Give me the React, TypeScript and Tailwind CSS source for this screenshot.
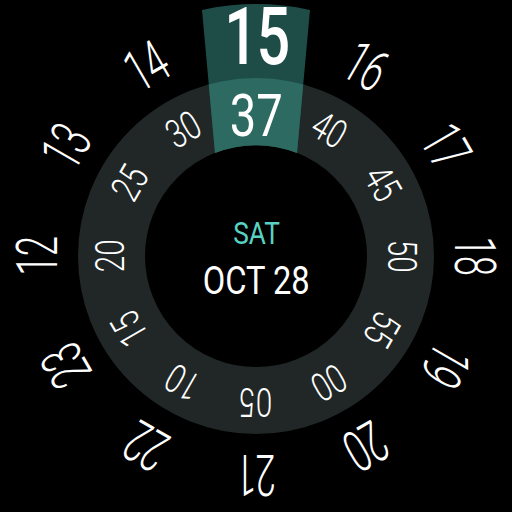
import React from 'react';

const HOURS = [12, 13, 14, 15, 16, 17, 18, 19, 20, 21, 22, 23];
const MINUTES = [0, 5, 10, 15, 20, 25, 30, 40, 45, 50, 55];
const ACTIVE_HOUR = 15;
const ACTIVE_MIN = 37;
// minute dial is indexed by 5-minute slot, 35 sits under the band
const MIN_SLOT = 35;

const pad = (n: number) => String(n).padStart(2, '0');

function Dial({ angle, radius, children }: { angle: number; radius: number; children: React.ReactNode }) {
  return (
    <div
      className="absolute left-1/2 top-1/2 w-0 h-0 flex items-center justify-center"
      style={{ transform: `rotate(${angle}deg) translateY(${-radius}px)` }}
    >
      {children}
    </div>
  );
}

function Face() {
  return (
    <svg className="absolute inset-0" width="512" height="512" viewBox="0 0 512 512">
      <defs>
        <clipPath id="ring">
          <circle cx="256" cy="256" r="178" />
        </clipPath>
      </defs>
      {/* minute ring */}
      <circle cx="256" cy="256" r="144.5" fill="none" stroke="#212726" strokeWidth="67" />
      {/* highlight band */}
      <path d="M202 10 A251 251 0 0 1 310 10 L297 153 A111 111 0 0 0 215 153 Z" fill="#1e4c46" />
      <path
        d="M202 10 A251 251 0 0 1 310 10 L297 153 A111 111 0 0 0 215 153 Z"
        fill="#2d6a61"
        clipPath="url(#ring)"
      />
    </svg>
  );
}

export default function App() {
  return (
    <div className="relative w-[512px] h-[512px] bg-black overflow-hidden font-[Roboto,sans-serif] text-white flex items-center justify-center">
      <Face />

      {HOURS.filter(h => h !== ACTIVE_HOUR).map(h => (
        <Dial key={h} angle={(h - ACTIVE_HOUR) * 30} radius={219}>
          <span className="block whitespace-nowrap text-[58px] leading-[0.8] font-light tracking-tight scale-x-[0.63]">
            {h}
          </span>
        </Dial>
      ))}

      {MINUTES.map(m => (
        <Dial key={m} angle={(m - MIN_SLOT) * 6} radius={145}>
          <span className="block whitespace-nowrap text-[40px] leading-[0.8] font-light scale-x-[0.74]">
            {pad(m)}
          </span>
        </Dial>
      ))}

      <Dial angle={0} radius={219}>
        <span className="block whitespace-nowrap text-[80px] leading-[0.8] font-medium tracking-tight scale-x-[0.74]">
          {ACTIVE_HOUR}
        </span>
      </Dial>
      <Dial angle={0} radius={140}>
        <span className="block whitespace-nowrap text-[59px] leading-[0.8] font-normal scale-x-[0.8]">
          {ACTIVE_MIN}
        </span>
      </Dial>

      <div className="relative flex flex-col items-center mt-[4px]">
        <span className="text-[32px] leading-none text-[#58d3c3] scale-x-[0.82]">SAT</span>
        <span className="mt-[13px] text-[38px] leading-none scale-x-[0.86]">OCT 28</span>
      </div>
    </div>
  );
}
